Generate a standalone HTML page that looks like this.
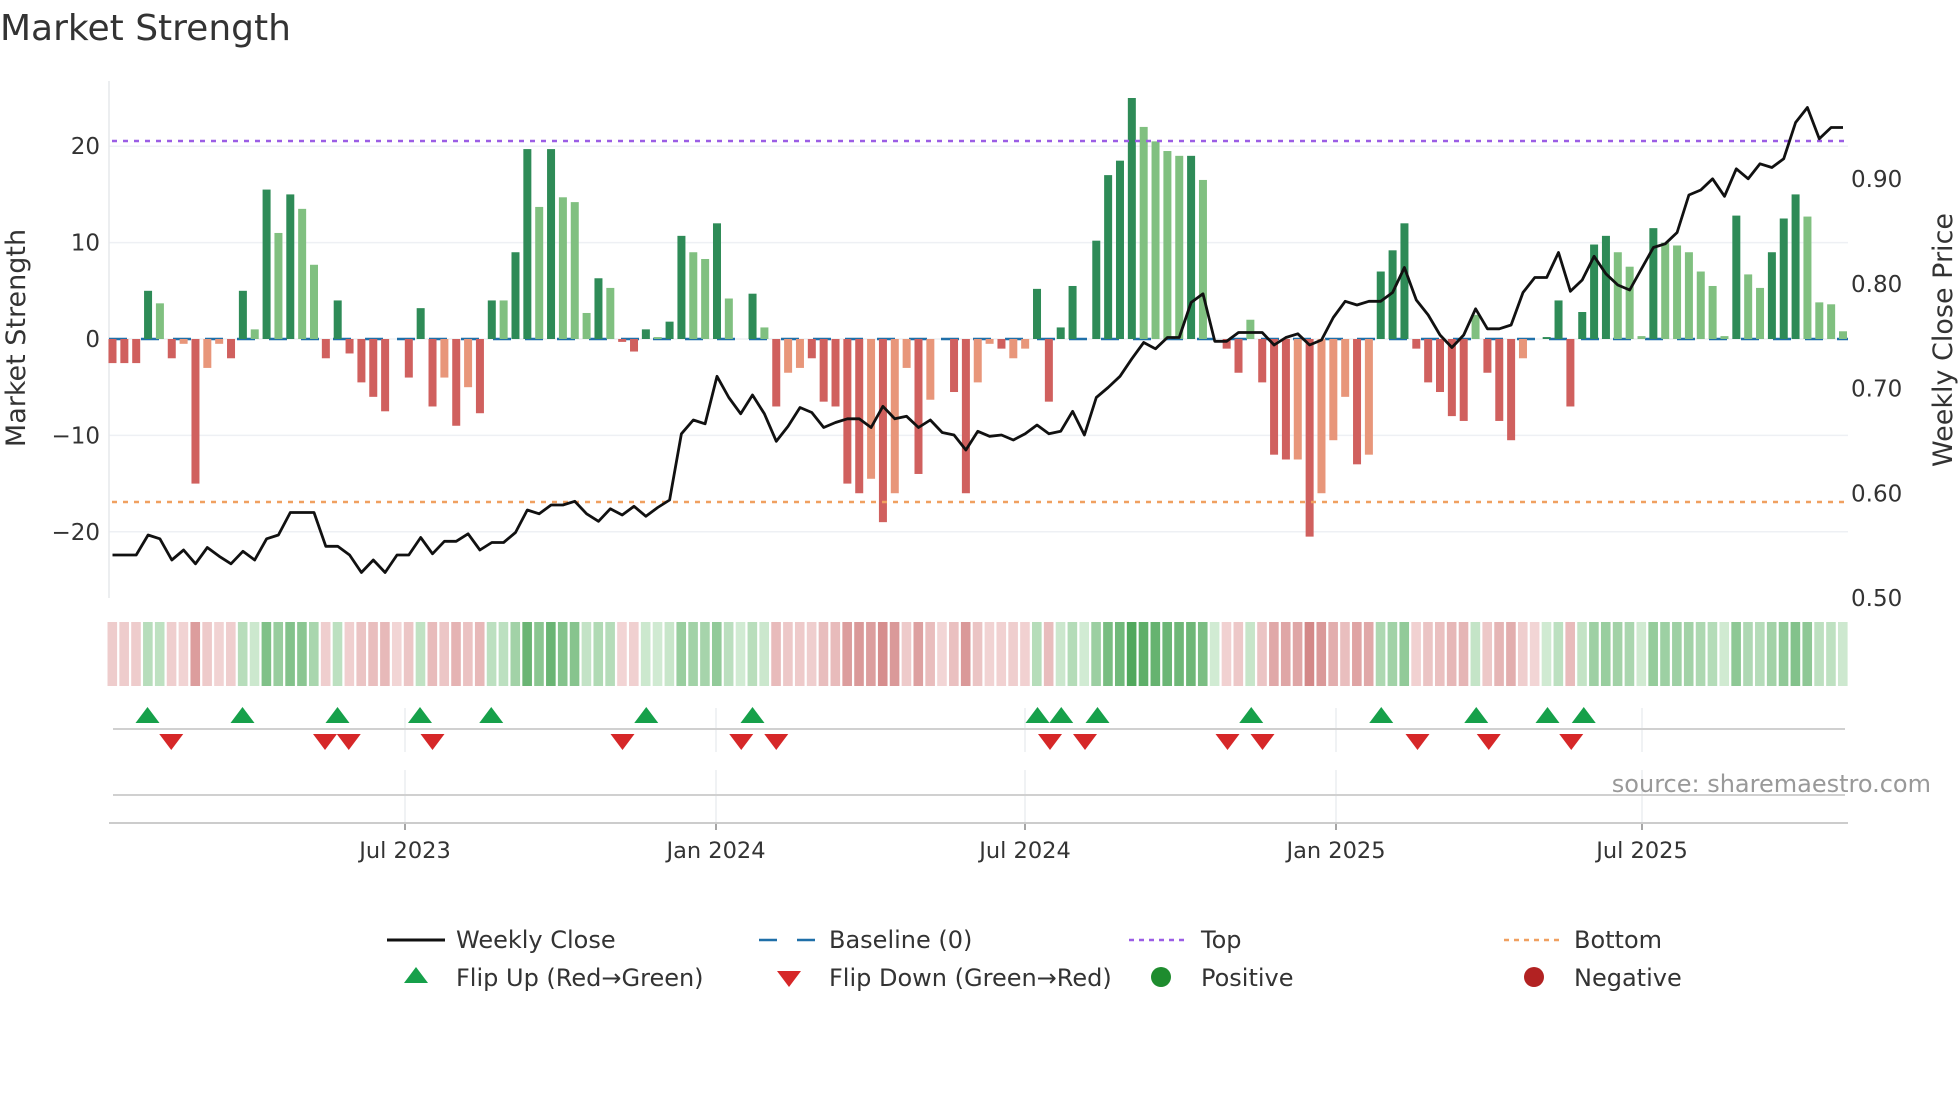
<!DOCTYPE html>
<html><head><meta charset="utf-8"><style>
html,body{margin:0;padding:0;background:#fff;width:1960px;height:1102px;overflow:hidden}
svg{display:block;font-family:"DejaVu Sans","Liberation Sans",sans-serif}
</style></head><body>
<svg id="s" width="1960" height="1102" xmlns="http://www.w3.org/2000/svg">
<text x="0" y="40" font-size="36" fill="#333">Market Strength</text>
<g id="g"></g>
</svg>
<script>
const S=1.25,NS="http://www.w3.org/2000/svg",g=document.getElementById('g');
function el(t,a,txt){const e=document.createElementNS(NS,t);for(const k in a)e.setAttribute(k,a[k]);if(txt!=null)e.textContent=txt;g.appendChild(e);return e;}
const B=[[-2.5,'r'],[-2.5,'r'],[-2.5,'r'],[5,'d'],[3.7,'l'],[-2,'r'],[-0.5,'o'],[-15,'r'],[-3,'o'],[-0.5,'o'],[-2,'r'],[5,'d'],[1,'l'],[15.5,'d'],[11,'l'],[15,'d'],[13.5,'l'],[7.7,'l'],[-2,'r'],[4,'d'],[-1.5,'r'],[-4.5,'r'],[-6,'r'],[-7.5,'r'],[0,'r'],[-4,'r'],[3.2,'d'],[-7,'r'],[-4,'o'],[-9,'r'],[-5,'o'],[-7.7,'r'],[4,'d'],[4,'l'],[9,'d'],[19.7,'d'],[13.7,'l'],[19.7,'d'],[14.7,'l'],[14.2,'l'],[2.7,'l'],[6.3,'d'],[5.3,'l'],[-0.3,'r'],[-1.3,'r'],[1,'d'],[0.2,'l'],[1.8,'d'],[10.7,'d'],[9,'l'],[8.3,'l'],[12,'d'],[4.2,'l'],[0,'l'],[4.7,'d'],[1.2,'l'],[-7,'r'],[-3.5,'o'],[-3,'o'],[-2,'r'],[-6.5,'r'],[-7,'r'],[-15,'r'],[-16,'r'],[-14.5,'o'],[-19,'r'],[-16,'o'],[-3,'o'],[-14,'r'],[-6.3,'o'],[0,'r'],[-5.5,'r'],[-16,'r'],[-4.5,'o'],[-0.5,'o'],[-1,'r'],[-2,'o'],[-1,'o'],[5.2,'d'],[-6.5,'r'],[1.2,'d'],[5.5,'d'],[0,'d'],[10.2,'d'],[17,'d'],[18.5,'d'],[25,'d'],[22,'l'],[20.5,'l'],[19.5,'l'],[19,'l'],[19,'d'],[16.5,'l'],[0,'l'],[-1,'r'],[-3.5,'r'],[2,'l'],[-4.5,'r'],[-12,'r'],[-12.5,'r'],[-12.5,'o'],[-20.5,'r'],[-16,'o'],[-10.5,'o'],[-6,'o'],[-13,'r'],[-12,'o'],[7,'d'],[9.2,'d'],[12,'d'],[-1,'r'],[-4.5,'r'],[-5.5,'r'],[-8,'r'],[-8.5,'r'],[2.5,'l'],[-3.5,'r'],[-8.5,'r'],[-10.5,'r'],[-2,'o'],[0,'o'],[0.2,'d'],[4,'d'],[-7,'r'],[2.8,'d'],[9.8,'d'],[10.7,'d'],[9,'l'],[7.5,'l'],[0.3,'l'],[11.5,'d'],[10,'l'],[9.7,'l'],[9,'l'],[7,'l'],[5.5,'l'],[0.3,'l'],[12.8,'d'],[6.7,'l'],[5.3,'l'],[9,'d'],[12.5,'d'],[15,'d'],[12.7,'l'],[3.8,'l'],[3.6,'l'],[0.8,'l']];
const N=B.length,X0=112.5,DX=(1843-112.5)/(N-1);
const Y0=339,U=9.64;
const col={d:'#2e8b57',l:'#80c080',r:'#d0605e',o:'#e8967a'};
[20,10,0,-10,-20].forEach(v=>{const y=Y0-v*U;el('line',{x1:109,x2:1848,y1:y,y2:y,stroke:'#eef0f4','stroke-width':1.5});
 el('text',{x:100,y:y+8,'font-size':23,fill:'#333','text-anchor':'end'},v<0?'\u2212'+(-v):''+v);});
[0.9,0.8,0.7,0.6,0.5].forEach(p=>{const y=598-(p-0.5)*1047.5;el('text',{x:1851,y:y+8,'font-size':23,fill:'#333'},p.toFixed(2));});
el('line',{x1:109,x2:109,y1:81,y2:598,stroke:'#e6e8ec','stroke-width':1.5});
el('line',{x1:109,x2:1848,y1:Y0,y2:Y0,stroke:'#1f6fa8','stroke-width':2.5,'stroke-dasharray':'18 14'});
B.forEach((b,i)=>{const x=X0+i*DX-4,h=Math.abs(b[0])*U;if(h<0.5)return;
 el('rect',{x:x,y:b[0]>0?Y0-h:Y0,width:8,height:h,fill:col[b[1]]});});
el('line',{x1:112,x2:1845,y1:141,y2:141,stroke:'#9b5de5','stroke-width':2.5,'stroke-dasharray':'5 6'});
el('line',{x1:112,x2:1845,y1:502,y2:502,stroke:'#f0a060','stroke-width':2.5,'stroke-dasharray':'5 6'});
const P=[444,444,444,428,431,448,440,451,438,445,451,441,448,431,428,410,410,410,437,437,444,458,448,458,444,444,430,443,433,433,427,440,434,434,426,408,411,404,404,401,411,417,407,412,405,413,406,400,347,336,339,301,318,331,316,331,353,341,326,330,342,338,335,335,342,325,335,333,342,336,346,348,360,345,349,348,352,347,340,347,345,329,348,318,310,301,287,274,279,270,270,242,235,273,273,266,266,266,276,270,267,276,272,254,241,244,241,241,234,214,240,252,268,278,268,247,263,263,260,234,222,222,202,233,224,205,219,228,232,215,198,195,186,156,152,143,157,135,143,131,134,127,98,86,111,102,102];
let d='';P.forEach((y,i)=>{if(i>=N)return;d+=(i?'L':'M')+(X0+i*DX).toFixed(1)+' '+(y*S).toFixed(1);});
el('path',{d:d,fill:'none',stroke:'#111','stroke-width':2.8,'stroke-linejoin':'round'});
function lerp(a,b,t){return a.map((v,k)=>Math.round(v+(b[k]-v)*t));}
let last=-1;
B.forEach((b,i)=>{let v=b[0];let sgn=v>0?1:(v<0?-1:last);last=sgn;
 let t=Math.min(1,0.05+Math.abs(v)/26);
 let c=sgn>0?lerp([216,238,217],[80,168,92],t):lerp([244,218,218],[205,120,120],t);
 el('rect',{x:X0+i*DX-5,y:622,width:9.6,height:64,fill:'rgb('+c.join(',')+')'});});
const ticks=[[405,'Jul 2023'],[716,'Jan 2024'],[1025,'Jul 2024'],[1336,'Jan 2025'],[1642,'Jul 2025']];
ticks.forEach(t=>{el('line',{x1:t[0],x2:t[0],y1:708,y2:752,stroke:'#e6e8ec','stroke-width':1.2});
 el('line',{x1:t[0],x2:t[0],y1:770,y2:823,stroke:'#e6e8ec','stroke-width':1.2});
 el('line',{x1:t[0],x2:t[0],y1:823,y2:830,stroke:'#888','stroke-width':1.5});
 el('text',{x:t[0],y:858,'font-size':22.5,fill:'#333','text-anchor':'middle'},t[1]);});
el('line',{x1:113,x2:1845,y1:729,y2:729,stroke:'#d0d0d0','stroke-width':2});
el('line',{x1:113,x2:1845,y1:795,y2:795,stroke:'#d0d0d0','stroke-width':2});
el('line',{x1:109,x2:1848,y1:823,y2:823,stroke:'#ccc','stroke-width':2});
function up(x,y,c){el('path',{d:`M${x-12} ${y+8}L${x} ${y-8}L${x+12} ${y+8}Z`,fill:c});}
function dn(x,y,c){el('path',{d:`M${x-12} ${y-7}L${x} ${y+9}L${x+12} ${y-7}Z`,fill:c});}
[118,194,270,336,393,517,602,830,849,878,1001,1105,1181,1238,1267].forEach(x=>up(x*S,715,'#16a04a'));
[137,260,279,346,498,593,621,840,868,982,1010,1134,1191,1257].forEach(x=>dn(x*S,741,'#d62728'));
el('text',{x:1931,y:792,'font-size':24,fill:'#999','text-anchor':'end'},'source: sharemaestro.com');
el('text',{x:0,y:0,'font-size':27,fill:'#333','text-anchor':'middle',transform:'translate(25,338) rotate(-90)'},'Market Strength');
el('text',{x:0,y:0,'font-size':27,fill:'#333','text-anchor':'middle',transform:'translate(1952,340) rotate(-90)'},'Weekly Close Price');
const L1=948,L2=986,FS=24;
el('line',{x1:387,x2:445,y1:L1-8,y2:L1-8,stroke:'#111','stroke-width':3});
el('text',{x:456,y:L1,'font-size':FS,fill:'#333'},'Weekly Close');
el('line',{x1:759,x2:815,y1:L1-8,y2:L1-8,stroke:'#1f6fa8','stroke-width':2.5,'stroke-dasharray':'18 20'});
el('text',{x:829,y:L1,'font-size':FS,fill:'#333'},'Baseline (0)');
el('line',{x1:1129,x2:1187,y1:L1-8,y2:L1-8,stroke:'#9b5de5','stroke-width':2.5,'stroke-dasharray':'5 5'});
el('text',{x:1201,y:L1,'font-size':FS,fill:'#333'},'Top');
el('line',{x1:1504,x2:1560,y1:L1-8,y2:L1-8,stroke:'#f0a060','stroke-width':2.5,'stroke-dasharray':'5 5'});
el('text',{x:1574,y:L1,'font-size':FS,fill:'#333'},'Bottom');
up(416,L2-11,'#16a04a');el('text',{x:456,y:L2,'font-size':FS,fill:'#333'},'Flip Up (Red\u2192Green)');
dn(789,L2-8,'#d62728');el('text',{x:829,y:L2,'font-size':FS,fill:'#333'},'Flip Down (Green\u2192Red)');
el('circle',{cx:1161,cy:L2-9,r:10,fill:'#1e8c2e'});el('text',{x:1201,y:L2,'font-size':FS,fill:'#333'},'Positive');
el('circle',{cx:1534,cy:L2-9,r:10,fill:'#b22222'});el('text',{x:1574,y:L2,'font-size':FS,fill:'#333'},'Negative');
</script>
</body></html>
